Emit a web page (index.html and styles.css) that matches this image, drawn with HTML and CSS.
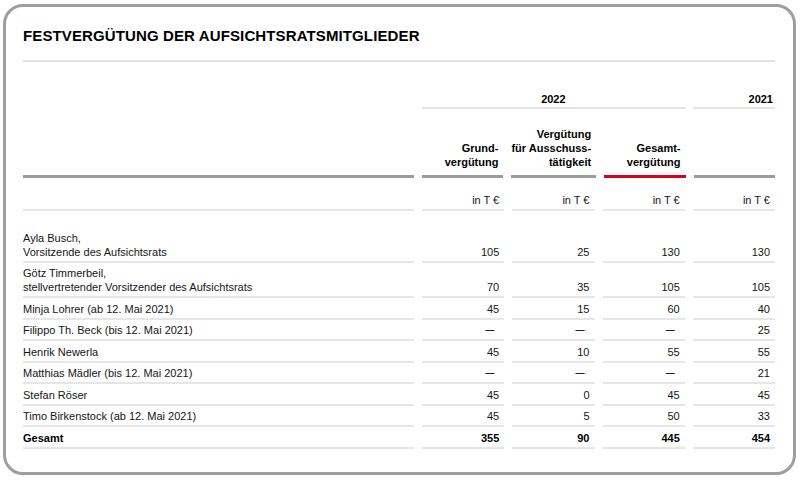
FILE: index.html
```html
<!DOCTYPE html>
<html lang="de">
<head>
<meta charset="utf-8">
<title>Festvergütung der Aufsichtsratsmitglieder</title>
<link rel="stylesheet" href="styles.css">
</head>
<body>
<div class="frame">
  <h1 class="title">FESTVERGÜTUNG DER AUFSICHTSRATSMITGLIEDER</h1>
  <div class="table">
    <div class="row year-row">
      <div class="cell blank"></div>
      <div class="cell year span3">2022</div>
      <div class="cell year">2021</div>
    </div>
    <div class="row head-row">
      <div class="cell head"></div>
      <div class="cell head num">Grund-<br>vergütung</div>
      <div class="cell head num">Vergütung<br>für Ausschuss-<br>tätigkeit</div>
      <div class="cell head num accent">Gesamt-<br>vergütung</div>
      <div class="cell head num"></div>
    </div>
    <div class="row unit-row">
      <div class="cell"></div>
      <div class="cell num">in T €</div>
      <div class="cell num">in T €</div>
      <div class="cell num">in T €</div>
      <div class="cell num">in T €</div>
    </div>
    <div class="row body first">
      <div class="cell">Ayla Busch,<br>Vorsitzende des Aufsichtsrats</div>
      <div class="cell num">105</div>
      <div class="cell num">25</div>
      <div class="cell num">130</div>
      <div class="cell num">130</div>
    </div>
    <div class="row body">
      <div class="cell">Götz Timmerbeil,<br>stellvertretender Vorsitzender des Aufsichtsrats</div>
      <div class="cell num">70</div>
      <div class="cell num">35</div>
      <div class="cell num">105</div>
      <div class="cell num">105</div>
    </div>
    <div class="row body">
      <div class="cell">Minja Lohrer (ab 12. Mai 2021)</div>
      <div class="cell num">45</div>
      <div class="cell num">15</div>
      <div class="cell num">60</div>
      <div class="cell num">40</div>
    </div>
    <div class="row body">
      <div class="cell">Filippo Th. Beck (bis 12. Mai 2021)</div>
      <div class="cell num"><span class="dash">—</span></div>
      <div class="cell num"><span class="dash">—</span></div>
      <div class="cell num"><span class="dash">—</span></div>
      <div class="cell num">25</div>
    </div>
    <div class="row body">
      <div class="cell">Henrik Newerla</div>
      <div class="cell num">45</div>
      <div class="cell num">10</div>
      <div class="cell num">55</div>
      <div class="cell num">55</div>
    </div>
    <div class="row body">
      <div class="cell">Matthias Mädler (bis 12. Mai 2021)</div>
      <div class="cell num"><span class="dash">—</span></div>
      <div class="cell num"><span class="dash">—</span></div>
      <div class="cell num"><span class="dash">—</span></div>
      <div class="cell num">21</div>
    </div>
    <div class="row body">
      <div class="cell">Stefan Röser</div>
      <div class="cell num">45</div>
      <div class="cell num">0</div>
      <div class="cell num">45</div>
      <div class="cell num">45</div>
    </div>
    <div class="row body">
      <div class="cell">Timo Birkenstock (ab 12. Mai 2021)</div>
      <div class="cell num">45</div>
      <div class="cell num">5</div>
      <div class="cell num">50</div>
      <div class="cell num">33</div>
    </div>
    <div class="row body total">
      <div class="cell">Gesamt</div>
      <div class="cell num">355</div>
      <div class="cell num">90</div>
      <div class="cell num">445</div>
      <div class="cell num">454</div>
    </div>
  </div>
</div>
</body>
</html>
```

FILE: styles.css
```css
html, body {
  margin: 0;
  padding: 0;
  background: #ffffff;
}

body {
  font-family: "Liberation Sans", Arial, sans-serif;
  color: #151515;
  font-size: 11px;
  line-height: 14px;
}

.frame {
  box-sizing: border-box;
  margin: 4px 0 0 3px;
  width: 793px;
  height: 471px;
  border: 3px solid #9e9e9e;
  border-radius: 20px;
  padding: 20px 0 0 17px;
  background: #ffffff;
}

.title {
  margin: 0;
  width: 752px;
  font-size: 15px;
  line-height: 18px;
  font-weight: bold;
  letter-spacing: 0.12px;
  color: #000000;
  padding-bottom: 15px;
  border-bottom: 2px solid #e3e3e3;
}

.table {
  width: 752px;
}

.row {
  display: grid;
  grid-template-columns: 391px repeat(4, 1fr);
  column-gap: 8px;
}

.cell {
  display: flex;
  flex-direction: column;
  justify-content: flex-end;
  white-space: nowrap;
}

.num {
  text-align: right;
  align-items: flex-end;
  padding-right: 5px;
}

.year-row .cell {
  padding-top: 30px;
  padding-bottom: 1px;
  font-weight: bold;
  color: #000;
}

.year-row .year {
  border-bottom: 2px solid #e3e3e3;
  align-items: flex-end;
  padding-right: 2px;
}

.year-row .span3 {
  grid-column: span 3;
  align-items: center;
  padding-right: 0;
}

.head-row .cell {
  padding-top: 18px;
  padding-bottom: 6px;
  font-weight: bold;
  color: #000;
  border-bottom: 3px solid #9b9b9b;
}

.head-row .accent {
  border-bottom-color: #d9001b;
}

.unit-row .cell {
  padding-top: 15px;
  padding-bottom: 2px;
  border-bottom: 2px solid #e6e6e6;
}

.body .cell {
  padding-top: 3.5px;
  padding-bottom: 2px;
  border-bottom: 2px solid #e6e6e6;
}

.body.first .cell {
  padding-top: 19.5px;
}

.total .cell {
  font-weight: bold;
  color: #000;
}

.dash {
  display: inline-block;
  width: 9px;
  margin-right: 5px;
  text-align: center;
  font-size: 9px;
  font-weight: bold;
  color: #222;
}
```
